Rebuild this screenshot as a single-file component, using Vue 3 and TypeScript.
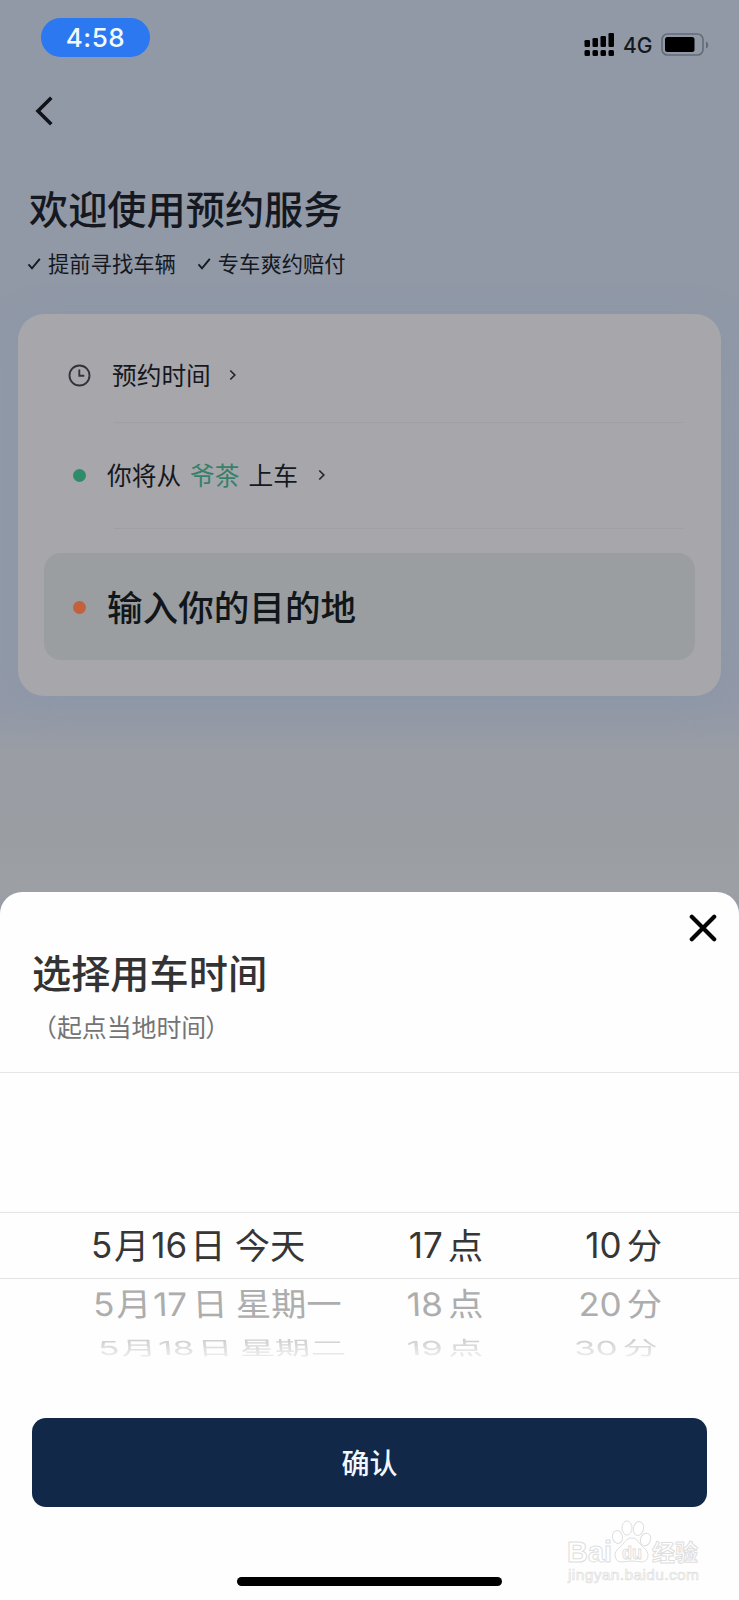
<script setup lang="ts">
interface PickerRow {
  level: string
  day: string
  week: string
  hour: string
  minute: string
}

const perks: string[] = ['提前寻找车辆', '专车爽约赔付']
const signalHeights: number[] = [7, 9, 11, 14]
const rows: PickerRow[] = [
  { level: 'current', day: '16', week: '今天', hour: '17', minute: '10' },
  { level: 'near', day: '17', week: '星期一', hour: '18', minute: '20' },
  { level: 'far', day: '18', week: '星期二', hour: '19', minute: '30' },
]
const dayParts = (r: PickerRow): string[] => ['5', '月', r.day, '日', r.week]
</script>

<template>
  <main class="phone">
    <header class="status">
      <span class="clock-pill">4:58</span>
      <div class="status-right">
        <svg class="signal" width="30" height="24" viewBox="0 0 30 24">
          <g v-for="(h, i) in signalHeights" :key="i">
            <rect :x="i * 8 + 0.5" :y="14 - h" width="5.5" :height="h" rx="1.3" />
            <rect :x="i * 8 + 0.5" y="17" width="5.5" height="6" rx="1.5" />
          </g>
        </svg>
        <span class="network">4G</span>
        <svg class="battery" width="49" height="24" viewBox="0 0 49 24">
          <rect x="1" y="1" width="41" height="21" rx="5.5" fill="none" stroke="#646b78" stroke-width="1.6" />
          <rect x="4" y="4" width="29.5" height="15" rx="2.5" />
          <path d="M45 8.500c3 1 3 6 0 7z" fill="#646b78" />
        </svg>
      </div>
    </header>

    <nav class="nav">
      <svg width="20" height="30" viewBox="0 0 20 30">
        <path d="M17.300 1.800 4 15 17.300 28.200" fill="none" stroke="#101319" stroke-width="3.6" />
      </svg>
    </nav>

    <section class="intro">
      <h1>欢迎使用预约服务</h1>
      <ul>
        <li v-for="perk in perks" :key="perk">
          <svg width="14" height="14" viewBox="0 0 14 14">
            <path d="M1.500 8.300 5 12.300 12.800 2.800" fill="none" stroke="#191c23" stroke-width="2" />
          </svg>
          <span>{{ perk }}</span>
        </li>
      </ul>
    </section>

    <section class="card">
      <div class="row time">
        <svg class="clock" width="23" height="23" viewBox="0 0 23 23" fill="none" stroke="#33343b" stroke-width="1.9">
          <circle cx="11.5" cy="11.5" r="10" />
          <path d="M11.3 5.500v6.300h5" />
        </svg>
        <span>预约时间</span>
        <svg class="chev" width="8" height="12" viewBox="0 0 8 12"><path d="M1.300 1.500 5.800 6l-4.500 4.500" /></svg>
      </div>
      <div class="row pickup">
        <i class="dot green"></i>
        <span>你将从</span><span class="place">爷茶</span><span>上车</span>
        <svg class="chev" width="8" height="12" viewBox="0 0 8 12"><path d="M1.300 1.500 5.800 6l-4.500 4.500" /></svg>
      </div>
      <div class="destination">
        <i class="dot orange"></i>
        <span>输入你的目的地</span>
      </div>
    </section>

    <section class="sheet">
      <div class="sheet-head">
        <svg class="close" width="28" height="28" viewBox="0 0 28 28">
          <path d="M2.800 2.800 25.200 25.200M25.200 2.800 2.800 25.200" stroke="#050505" stroke-width="4.2" stroke-linecap="round" />
        </svg>
        <h2>选择用车时间</h2>
        <p>（起点当地时间<span class="paren">）</span></p>
      </div>
      <div class="picker">
        <div v-for="r in rows" :key="r.level" class="pick" :class="r.level">
          <div class="cell date">
            <span v-for="(p, i) in dayParts(r)" :key="i" :class="'part' + i">{{ p }}</span>
          </div>
          <div class="cell hour"><span class="num">{{ r.hour }}</span><span>点</span></div>
          <div class="cell minute"><span class="num">{{ r.minute }}</span><span>分</span></div>
        </div>
      </div>
      <button class="confirm">确认</button>
      <div class="home"></div>
    </section>

    <svg class="watermark" width="146" height="72" viewBox="0 0 146 72">
      <g fill="#fff" stroke="#dedede" stroke-width="1">
        <text x="6" y="41.500" font-size="29" font-weight="700" textLength="45" lengthAdjust="spacingAndGlyphs">Bai</text>
        <ellipse cx="56.500" cy="17" rx="5" ry="6.500" transform="rotate(-12 56.500 17)" />
        <ellipse cx="66" cy="8" rx="5" ry="7" />
        <ellipse cx="77.500" cy="8.500" rx="5" ry="7" transform="rotate(12 77.500 8.500)" />
        <ellipse cx="84.500" cy="19.500" rx="5" ry="6.500" transform="rotate(20 84.500 19.500)" />
        <path d="M71 18c-6 0-8 6-12 9-5 4-6 8-4 12 3 5 10 2 16 2s12 3 15-2c2-4 1-8-4-12-4-3-5-9-11-9z" />
        <text x="61" y="39" font-size="19" font-weight="700" textLength="20" lengthAdjust="spacingAndGlyphs">du</text>
        <text class="cn" x="91" y="40.500" font-size="23" font-weight="700" textLength="46">经验</text>
        <text x="7" y="60" font-size="15.5" stroke-width="0.7" textLength="131">jingyan.baidu.com</text>
      </g>
    </svg>
  </main>
</template>

<style>
body {
  margin: 0;
}
</style>

<style scoped>
* {
  box-sizing: border-box;
}
.phone {
  position: relative;
  width: 739px;
  height: 1600px;
  overflow: hidden;
  display: flex;
  flex-direction: column;
  background: linear-gradient(#9199a7 0, #9199a7 300px, #9299a8 700px, #999da4 755px, #9a9ea3 820px, #9c9fa3 892px, #9699a3 920px);
  font-family: "Noto Sans CJK SC", sans-serif;
  color: #15181f;
}
h1, h2, p, ul {
  margin: 0;
  padding: 0;
}
.status {
  height: 76px;
  padding: 18px 29px 0 41px;
  display: flex;
  justify-content: space-between;
  align-items: flex-start;
}
.clock-pill {
  width: 109px;
  height: 39px;
  border-radius: 20px;
  background: #2b78f0;
  color: #f1faff;
  font: 500 26px/39px Inter, sans-serif;
  letter-spacing: 0.5px;
  text-align: center;
}
.status-right {
  display: flex;
  align-items: center;
  height: 24px;
  margin-top: 15px;
}
.network {
  font: 500 21px/24px Inter, sans-serif;
  width: 30px;
  margin: 2px 8px 0 9px;
}
.nav {
  height: 108px;
  padding: 20px 0 0 34px;
}
.nav svg {
  display: block;
}
.intro {
  height: 130px;
  padding-left: 27px;
}
h1 {
  height: 50px;
  padding-left: 2px;
  font-size: 39.2px;
  line-height: 46px;
  font-weight: 500;
}
.intro ul {
  display: flex;
  gap: 21px;
  margin-top: 14px;
  list-style: none;
}
.intro li {
  display: flex;
  align-items: center;
  gap: 7px;
  height: 30px;
  font-size: 21.3px;
  line-height: 30px;
}
.card {
  flex: none;
  width: 703px;
  height: 382px;
  margin-left: 18px;
  padding: 0 26px;
  border-radius: 26px;
  background: #a7a7ab;
  box-shadow: 0 6px 34px rgba(130, 145, 170, 0.35);
}
.row {
  position: relative;
  display: flex;
  align-items: center;
  font-size: 24.7px;
  line-height: 36px;
}
.row span {
  padding-bottom: 3px;
}
.row::after {
  content: "";
  position: absolute;
  left: 70px;
  right: 11px;
  bottom: 0;
  height: 1px;
  background: #9f9fa4;
}
.time {
  height: 109px;
  padding: 13px 0 0 24px;
}
.clock {
  margin-right: 21px;
}
.time .chev {
  margin-left: 18px;
}
.pickup {
  height: 106px;
  padding: 0 0 2px 29px;
}
.place {
  margin: 0 9px;
  color: #37806a;
}
.pickup .chev {
  margin-left: 20px;
}
.chev path {
  fill: none;
  stroke: #25262d;
  stroke-width: 1.7;
}
.dot {
  width: 13px;
  height: 13px;
  border-radius: 50%;
}
.green {
  background: #2f8c6b;
  margin-right: 21px;
}
.orange {
  background: #c2603f;
  margin-right: 21px;
}
.destination {
  display: flex;
  align-items: center;
  height: 107px;
  margin-top: 24px;
  padding: 2px 0 0 29px;
  border-radius: 17px;
  background: #9a9ea0;
  font-size: 35.6px;
  line-height: 52px;
  font-weight: 500;
  color: #11161a;
}
.destination span {
  padding-bottom: 4px;
}
.sheet {
  flex: none;
  display: flex;
  flex-direction: column;
  height: 708px;
  margin-top: 196px;
  background: #fefefe;
  border-radius: 22px 22px 0 0;
}
.sheet-head {
  position: relative;
  height: 181px;
  padding: 53px 0 0 32px;
  border-bottom: 1px solid #e6e6e6;
}
.close {
  position: absolute;
  right: 22px;
  top: 22px;
}
h2 {
  font-size: 39.2px;
  line-height: 52px;
  font-weight: 500;
  color: #333;
}
.sheet-head p {
  margin-top: 11px;
  font-size: 24.9px;
  line-height: 36px;
  color: #747474;
}
.paren {
  margin-left: -1px;
}
.picker {
  height: 345px;
  padding-top: 139px;
}
.pick {
  display: grid;
  grid-template-columns: 405px 173px 1fr;
  align-items: center;
  height: 67px;
  font-size: 35.3px;
  line-height: 44px;
}
.cell {
  display: flex;
  align-items: center;
  transform-origin: left center;
}
.cell span {
  padding-bottom: 4px;
}
.cell .part0, .cell .part2, .cell .num {
  padding-bottom: 1px;
  font-family: Inter, sans-serif;
  font-size: 35px;
}
.part0 {
  width: 23px;
}
.part2 {
  width: 39px;
  margin-left: 2px;
}
.part4 {
  margin-left: 9px;
}
.date {
  padding-left: 91px;
}
.hour, .minute {
  justify-content: flex-end;
}
.num {
  margin-right: 5px;
}
.hour {
  width: 78px;
}
.minute {
  width: 84px;
}
.current {
  border-top: 1px solid #e4e4e4;
  border-bottom: 1px solid #e4e4e4;
  color: #363636;
}
.near {
  height: 50px;
  color: #adadad;
}
.near .cell {
  transform: scaleY(0.92) skewX(2deg);
}
.near .date {
  padding-left: 93px;
}
.near .part4 {
  margin-left: 8px;
}
.far {
  height: 38px;
  color: #d0d0d0;
  -webkit-mask-image: linear-gradient(#000 30%, rgba(0, 0, 0, 0.35) 75%);
  mask-image: linear-gradient(#000 30%, rgba(0, 0, 0, 0.35) 75%);
}
.far .cell {
  transform: translateY(-5px) scaleY(0.55) skewX(3deg);
}
.far .date {
  padding-left: 98px;
}
.far .part4 {
  margin-left: 7px;
}
.far .minute {
  width: 80px;
}
.confirm {
  width: 675px;
  height: 89px;
  margin-left: 32px;
  padding: 0;
  border: 0;
  border-radius: 14px;
  background: #112848;
  color: #f2f7ff;
  font: 500 28px/89px "Noto Sans CJK SC", sans-serif;
}
.home {
  width: 265px;
  height: 9px;
  margin: 70px 0 0 237px;
  border-radius: 5px;
  background: #000;
}
.watermark {
  position: absolute;
  left: 561px;
  top: 1520px;
  font-family: "Liberation Sans", sans-serif;
}
.cn {
  font-family: "Noto Sans CJK SC", sans-serif;
}
</style>
